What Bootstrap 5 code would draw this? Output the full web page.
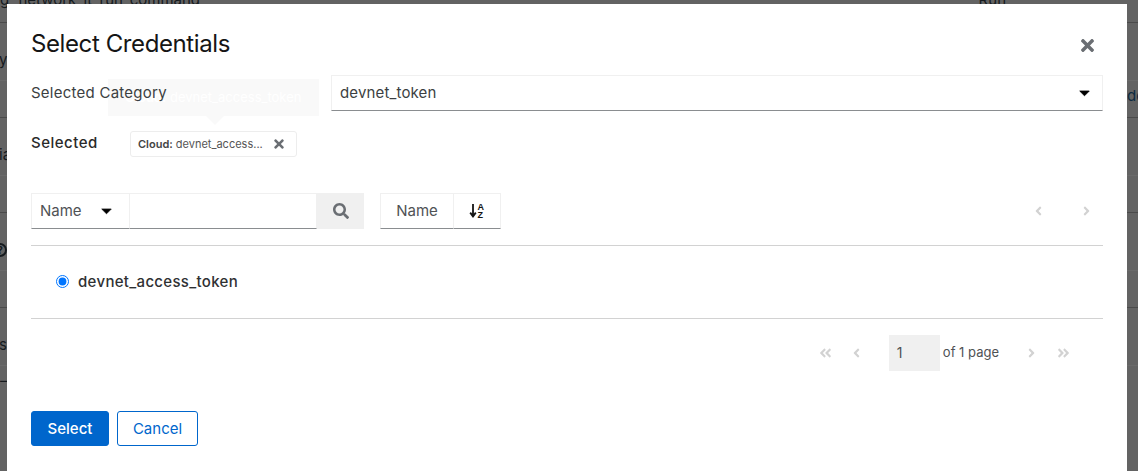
<!DOCTYPE html>
<html lang="en">
<head>
<meta charset="UTF-8">
<title>Select Credentials</title>
<link rel="stylesheet" href="https://cdn.jsdelivr.net/npm/bootstrap@5.3.0/dist/css/bootstrap.min.css">
<style>
    html, body { height: 471px; overflow: hidden; }
    body { background: #636363; font-family: Inter, "Liberation Sans", sans-serif; color: #151515; font-size: 15px; }

    /* page behind the modal */
    .back-page { height: 471px; overflow: hidden; color: #151a1e; font-size: 15px; }
    .back-first { height: 23px; border-bottom: 1px solid #4a4a4a; display: flex; justify-content: space-between; align-items: flex-end; padding-bottom: 13px; padding-right: 132px; line-height: 18px; white-space: nowrap; word-spacing: 5px; }
    .back-row { height: 58px; border-bottom: 1px solid #6a6a6a; display: flow-root; }
    .back-row2 { height: 37px; border-bottom: 1px solid #4a4a4a; }
    .back-left { line-height: 18px; padding-top: 28px; margin-left: -1px; }
    .back-help { width: 14px; height: 14px; margin: 30px 0 0 -7px; border: 2px solid #151a1e; border-radius: 50%; font-size: 10px; font-weight: 700; line-height: 10px; text-align: center; }
    .back-right { line-height: 18px; padding-top: 6px; padding-left: 1127px; color: #0c2a3f; white-space: nowrap; }
    .back-dash { line-height: 18px; padding-top: 6px; }

    /* modal */
    .cred-modal { position: fixed; left: 7px; right: 11px; top: 4px; bottom: 0; background: #fff; padding: 24px 24px 0; }
    .cred-head { height: 30px; }
    .cred-title { font-size: 24px; line-height: 32px; padding-top: 2px; font-weight: 400; margin: 0; letter-spacing: -.4px; }
    .cred-box { border: 1px solid #f0f0f0; border-bottom-color: #8a8d90; height: 36px; background: #fff; color: #3c3f42; }
    .cat-label { width: 300px; height: 36px; line-height: 36px; color: #3c3f42; position: relative; z-index: 1; letter-spacing: .25px; }
    .cat-value { letter-spacing: .15px; }
    .sel-label { width: 99px; height: 26px; font-weight: 500; line-height: 24px; color: #2a2a2a; letter-spacing: .5px; }
    .cred-chip { width: 167px; height: 26px; border: 1px solid #ededed; border-radius: 3px; font-size: 11px; padding: 0 12px 0 7px; color: #555; }
    .cred-chip b { font-weight: 600; color: #444; margin-right: 3px; }
    .cat-row { margin-top: 17px; }
    .sel-row { margin-top: 20px; }
    .tool-row { margin-top: 36px; }
    .name-drop { width: 99px; padding: 0 17px 0 8px; color: #4f5255; }
    .name-input { width: 187px; border-left: 0; }
    .search-btn { width: 47px; height: 36px; background: #f0f0f0; }
    .sort-wrap { margin-left: 16px; }
    .sort-name { width: 74px; color: #4f5255; }
    .sort-icon { width: 47px; border-left: 0; }
    .top-pager { gap: 39px; }
    .cred-line { border-top: 1px solid #d2d2d2; }
    .cred-list { height: 72px; padding: 0 0 1px 25px; }
    .cred-list input { width: 13px; height: 13px; margin: 0 9px 0 0; }
    .cred-list label { font-weight: 500; color: #2f3133; letter-spacing: .32px; padding-top: 2px; }
    .pager-row { margin-top: 16px; height: 36px; padding-right: 32px; font-size: 13px; color: #4f5255; }
    .pager-first { margin-right: 19px; }
    .pager-next { margin: 0 20px 0 28px; }
    .page-num { width: 51px; height: 36px; background: #f0f0f0; line-height: 36px; padding-left: 8px; font-size: 14px; margin: 0 3px 0 28px; }
    .btn-row { margin-top: 40px; }
    .btn-select { background: #06c; border: 1px solid #06c; color: #fff; width: 78px; height: 35px; padding: 1px 0 0; border-radius: 3px; font-size: 15px; font-weight: 500; }
    .btn-cancel { border: 1px solid #06c; color: #06c; background: #fff; width: 81px; height: 35px; padding: 1px 0 0; border-radius: 3px; font-size: 15px; margin-left: 8px; }
    .close-ico { margin: 4px 9px 0 0; }
    .ico-grey { fill: #6a6e73; }
    .ico-off { fill: #d2d2d2; }
    .flip { transform: scaleX(-1); }

    /* tooltip fading out over the form */
    .fade-tip { position: absolute; left: 101px; top: 75px; width: 211px; height: 37px; background: #f9f9f9; color: #fff; font-size: 13px; line-height: 37px; padding-left: 17px; white-space: nowrap; overflow: hidden; }
    .fade-tip b { display: inline-block; width: 45px; font-weight: 600; }
    .fade-arrow { position: absolute; left: 199px; top: 112px; border: 9px solid transparent; border-top-color: #f9f9f9; border-bottom: 0; }
</style>
</head>
<body>

<div class="back-page">
    <div class="back-first"><span>g network_it_run_command</span><span>Run</span></div>
    <div class="back-row"><div class="back-left">y</div></div>
    <div class="back-row2"><div class="back-right">de</div></div>
    <div class="back-row"><div class="back-left">ia</div></div>
    <div class="back-row2"></div>
    <div class="back-row"><div class="back-help">?</div></div>
    <div class="back-row2"></div>
    <div class="back-row"><div class="back-left">s</div></div>
    <div class="back-dash">–</div>
</div>

<div class="cred-modal">
    <div class="d-flex justify-content-between align-items-center cred-head">
        <h1 class="cred-title">Select Credentials</h1>
        <svg class="ico-grey close-ico" width="13" height="19" viewBox="0 0 352 512"><path d="M242.72 256l100.07-100.07c12.28-12.28 12.28-32.19 0-44.48l-22.24-22.24c-12.28-12.28-32.19-12.28-44.48 0L176 189.28 75.93 89.21c-12.28-12.28-32.19-12.28-44.48 0L9.21 111.45c-12.28 12.28-12.28 32.19 0 44.48L109.28 256 9.21 356.07c-12.28 12.28-12.28 32.19 0 44.48l22.24 22.24c12.28 12.28 32.2 12.28 44.48 0L176 322.72l100.07 100.07c12.28 12.28 32.2 12.28 44.48 0l22.24-22.24c12.28-12.28 12.28-32.19 0-44.48L242.72 256z"/></svg>
    </div>

    <div class="d-flex cat-row">
        <div class="cat-label">Selected Category</div>
        <div class="cred-box flex-grow-1 d-flex align-items-center justify-content-between px-2">
            <span class="cat-value">devnet_token</span>
            <svg class="me-1" width="11" height="7" viewBox="0 0 12 8"><path d="M.6 1.2h10.8L6 6.6z" stroke="#000" stroke-width="1" stroke-linejoin="round"/></svg>
        </div>
    </div>

    <div class="d-flex sel-row">
        <div class="sel-label">Selected</div>
        <div class="cred-chip d-flex align-items-center justify-content-between">
            <span><b>Cloud:</b>devnet_access...</span>
            <svg class="ico-grey" width="10" height="14" viewBox="0 0 352 512"><path d="M242.72 256l100.07-100.07c12.28-12.28 12.28-32.19 0-44.48l-22.24-22.24c-12.28-12.28-32.19-12.28-44.48 0L176 189.28 75.93 89.21c-12.28-12.28-32.19-12.28-44.48 0L9.21 111.45c-12.28 12.28-12.28 32.19 0 44.48L109.28 256 9.21 356.07c-12.28 12.28-12.28 32.19 0 44.48l22.24 22.24c12.28 12.28 32.2 12.28 44.48 0L176 322.72l100.07 100.07c12.28 12.28 32.2 12.28 44.48 0l22.24-22.24c12.28-12.28 12.28-32.19 0-44.48L242.72 256z"/></svg>
        </div>
    </div>

    <div class="d-flex align-items-center tool-row">
        <div class="cred-box name-drop d-flex align-items-center justify-content-between">
            <span>Name</span>
            <svg width="11" height="7" viewBox="0 0 12 8"><path d="M.6 1.2h10.8L6 6.6z" stroke="#151515" stroke-width="1" stroke-linejoin="round"/></svg>
        </div>
        <div class="cred-box name-input"></div>
        <div class="search-btn d-flex align-items-center justify-content-center">
            <svg class="ico-grey" width="16" height="16" viewBox="0 0 512 512"><path d="M505 442.7L405.3 343c-4.5-4.5-10.6-7-17-7H372c27.6-35.3 44-79.7 44-128C416 93.1 322.9 0 208 0S0 93.1 0 208s93.1 208 208 208c48.3 0 92.7-16.4 128-44v16.3c0 6.4 2.5 12.5 7 17l99.7 99.7c9.4 9.4 24.6 9.4 33.9 0l28.3-28.3c9.4-9.4 9.4-24.6.1-34zM208 336c-70.7 0-128-57.2-128-128 0-70.7 57.2-128 128-128 70.7 0 128 57.2 128 128 0 70.7-57.2 128-128 128z"/></svg>
        </div>
        <div class="d-flex sort-wrap">
            <div class="cred-box sort-name d-flex align-items-center justify-content-center">Name</div>
            <div class="cred-box sort-icon d-flex align-items-center justify-content-center">
                <svg width="16" height="16" viewBox="0 0 16 16"><path d="M4 1v11M1.2 9.6 4 13.4l2.8-3.8" fill="none" stroke="#151515" stroke-width="1.8"/><text x="8.4" y="7" font-size="9" font-weight="700" font-family="Liberation Sans, sans-serif" fill="#151515">A</text><text x="8.6" y="15.4" font-size="9" font-weight="700" font-family="Liberation Sans, sans-serif" fill="#151515">Z</text></svg>
            </div>
        </div>
        <div class="ms-auto d-flex align-items-center top-pager me-2 pe-1">
            <svg class="ico-off" width="9" height="14" viewBox="0 0 256 512"><path d="M31.7 239l136-136c9.4-9.4 24.6-9.4 33.9 0l22.6 22.6c9.4 9.4 9.4 24.6 0 33.9L127.9 256l96.4 96.4c9.4 9.4 9.4 24.6 0 33.9L201.7 409c-9.4 9.4-24.6 9.4-33.9 0l-136-136c-9.5-9.4-9.5-24.6-.1-34z"/></svg>
            <svg class="ico-off flip" width="9" height="14" viewBox="0 0 256 512"><path d="M31.7 239l136-136c9.4-9.4 24.6-9.4 33.9 0l22.6 22.6c9.4 9.4 9.4 24.6 0 33.9L127.9 256l96.4 96.4c9.4 9.4 9.4 24.6 0 33.9L201.7 409c-9.4 9.4-24.6 9.4-33.9 0l-136-136c-9.5-9.4-9.5-24.6-.1-34z"/></svg>
        </div>
    </div>

    <div class="cred-line mt-3"></div>
    <div class="cred-list d-flex align-items-center">
        <input type="radio" id="cred1" checked>
        <label for="cred1">devnet_access_token</label>
    </div>
    <div class="cred-line"></div>

    <div class="d-flex justify-content-end align-items-center pager-row">
        <svg class="ico-off pager-first" width="15" height="14" viewBox="0 0 448 512"><path d="M223.7 239l136-136c9.4-9.4 24.6-9.4 33.9 0l22.6 22.6c9.4 9.4 9.4 24.6 0 33.9L319.9 256l96.4 96.4c9.4 9.4 9.4 24.6 0 33.9L393.7 409c-9.4 9.4-24.6 9.4-33.9 0l-136-136c-9.5-9.4-9.5-24.6-.1-34zm-192 34l136 136c9.4 9.4 24.6 9.4 33.9 0l22.6-22.6c9.4-9.4 9.4-24.6 0-33.9L127.9 256l96.4-96.4c9.4-9.4 9.4-24.6 0-33.9L201.7 103c-9.4-9.4-24.6-9.4-33.9 0l-136 136c-9.5 9.4-9.5 24.6-.1 34z"/></svg>
        <svg class="ico-off" width="9" height="14" viewBox="0 0 256 512"><path d="M31.7 239l136-136c9.4-9.4 24.6-9.4 33.9 0l22.6 22.6c9.4 9.4 9.4 24.6 0 33.9L127.9 256l96.4 96.4c9.4 9.4 9.4 24.6 0 33.9L201.7 409c-9.4 9.4-24.6 9.4-33.9 0l-136-136c-9.5-9.4-9.5-24.6-.1-34z"/></svg>
        <div class="page-num">1</div>
        <span>of 1 page</span>
        <svg class="ico-off flip pager-next" width="9" height="14" viewBox="0 0 256 512"><path d="M31.7 239l136-136c9.4-9.4 24.6-9.4 33.9 0l22.6 22.6c9.4 9.4 9.4 24.6 0 33.9L127.9 256l96.4 96.4c9.4 9.4 9.4 24.6 0 33.9L201.7 409c-9.4 9.4-24.6 9.4-33.9 0l-136-136c-9.5-9.4-9.5-24.6-.1-34z"/></svg>
        <svg class="ico-off flip" width="15" height="14" viewBox="0 0 448 512"><path d="M223.7 239l136-136c9.4-9.4 24.6-9.4 33.9 0l22.6 22.6c9.4 9.4 9.4 24.6 0 33.9L319.9 256l96.4 96.4c9.4 9.4 9.4 24.6 0 33.9L393.7 409c-9.4 9.4-24.6 9.4-33.9 0l-136-136c-9.5-9.4-9.5-24.6-.1-34zm-192 34l136 136c9.4 9.4 24.6 9.4 33.9 0l22.6-22.6c9.4-9.4 9.4-24.6 0-33.9L127.9 256l96.4-96.4c9.4-9.4 9.4-24.6 0-33.9L201.7 103c-9.4-9.4-24.6-9.4-33.9 0l-136 136c-9.5 9.4-9.5 24.6-.1 34z"/></svg>
    </div>

    <div class="d-flex btn-row">
        <button class="btn btn-select">Select</button>
        <button class="btn btn-cancel">Cancel</button>
    </div>

    <div class="fade-tip"><b>Cloud:</b>devnet_access_token</div>
    <div class="fade-arrow"></div>
</div>

</body>
</html>
